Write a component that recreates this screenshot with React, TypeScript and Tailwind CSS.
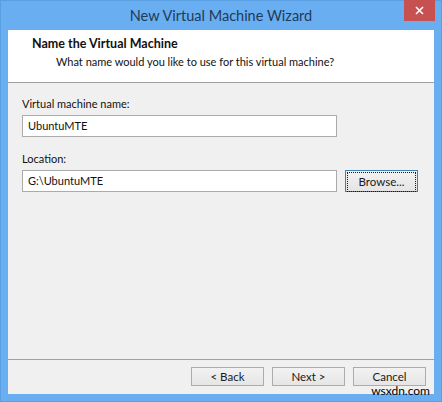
import React from 'react';

const font = { fontFamily: 'Lato, "Noto Sans", sans-serif' };

const WinButton: React.FC<{ label: string; focused?: boolean; className?: string }> = ({ label, focused, className }) => (
  <button
    className={`h-[19px] w-[73px] text-[11.5px] leading-none text-[#1a1a1a] bg-gradient-to-b from-[#f2f2f2] to-[#e5e5e5] border ${
      focused ? 'border-[#3c7fb1]' : 'border-[#acacac]'
    } ${className ?? ''}`}
  >
    {focused ? (
      <span className="flex items-center justify-center h-full m-[1px] border border-dotted border-[#1a1a1a]">{label}</span>
    ) : (
      label
    )}
  </button>
);

export default function App() {
  return (
    <div className="relative w-[442px] h-[402px] bg-[#69aef1] border border-[#5b9fe3] flex flex-col" style={font}>
      {/* title bar */}
      <div className="relative h-[29px] flex items-center justify-center">
        <span className="text-[14.5px] text-[#1f3b58]">New Virtual Machine Wizard</span>
        <div className="absolute right-[6px] -top-[1px] w-[31px] h-[21px] bg-[#c75050] flex items-center justify-center">
          <svg width="9" height="9" viewBox="0 0 9 9">
            <path d="M1 1 L8 8 M8 1 L1 8" stroke="#ffffff" strokeWidth="1.6" />
          </svg>
        </div>
      </div>

      {/* client area */}
      <div className="mx-[7px] h-[364px] flex flex-col bg-[#f0f0f0]">
        <div className="h-[53px] bg-white border-b border-[#a0a0a0] pl-[24px] pt-[6px]">
          <div className="text-[12.5px] font-bold text-[#111] leading-[16px]">Name the Virtual Machine</div>
          <div className="text-[11px] text-[#111] leading-[16px] pl-[24px] mt-[2px]">
            What name would you like to use for this virtual machine?
          </div>
        </div>

        <div className="flex-1 px-[14px] pt-[13px]">
          <div className="text-[11px] text-[#111] leading-[16px]">Virtual machine name:</div>
          <div className="mt-[3px] w-[315px] h-[22px] bg-white border border-[#ababab] flex items-center px-[5px] text-[11px] text-[#111]">
            UbuntuMTE
          </div>

          <div className="mt-[14px] text-[11px] text-[#111] leading-[16px]">Location:</div>
          <div className="mt-[3px] flex items-center">
            <div className="w-[315px] h-[22px] bg-white border border-[#ababab] flex items-center px-[5px] text-[11px] text-[#111]">
              G:\UbuntuMTE
            </div>
            <WinButton label="Browse..." focused className="ml-[8px] h-[22px]" />
          </div>
        </div>

        <div className="h-[35px] border-t border-[#a0a0a0] flex justify-end items-start pt-[7px] pr-[8px] gap-[8px]">
          <WinButton label="< Back" />
          <WinButton label="Next >" />
          <WinButton label="Cancel" />
        </div>
      </div>

      <div className="absolute right-[11px] bottom-[4px] text-[12px] text-black leading-none">wsxdn.com</div>
    </div>
  );
}
